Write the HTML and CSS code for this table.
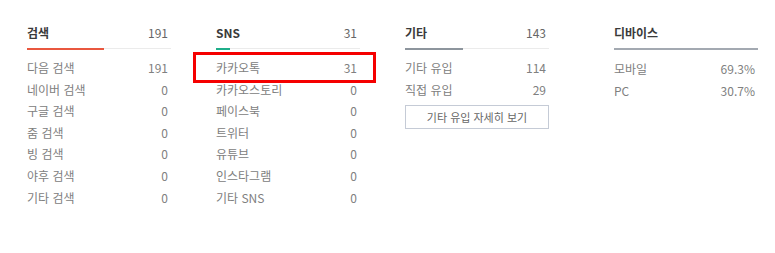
FILE: index.html
```html
<!DOCTYPE html>
<html lang="ko">
<head>
<meta charset="utf-8">
<link rel="stylesheet" href="styles.css">
</head>
<body>
<div class="stats">
  <section class="col">
    <div class="head"><span class="title">검색</span><span class="num">191</span></div>
    <div class="bar"><span class="fill fill-red" style="width:77px"></span></div>
    <ul class="rows">
      <li><span>다음 검색</span><span>191</span></li>
      <li><span>네이버 검색</span><span>0</span></li>
      <li><span>구글 검색</span><span>0</span></li>
      <li><span>줌 검색</span><span>0</span></li>
      <li><span>빙 검색</span><span>0</span></li>
      <li><span>야후 검색</span><span>0</span></li>
      <li><span>기타 검색</span><span>0</span></li>
    </ul>
  </section>
  <section class="col">
    <div class="head"><span class="title">SNS</span><span class="num">31</span></div>
    <div class="bar"><span class="fill fill-green" style="width:14px"></span></div>
    <ul class="rows">
      <li class="hl"><span>카카오톡</span><span>31</span></li>
      <li><span>카카오스토리</span><span>0</span></li>
      <li><span>페이스북</span><span>0</span></li>
      <li><span>트위터</span><span>0</span></li>
      <li><span>유튜브</span><span>0</span></li>
      <li><span>인스타그램</span><span>0</span></li>
      <li><span>기타 SNS</span><span>0</span></li>
    </ul>
  </section>
  <section class="col">
    <div class="head"><span class="title">기타</span><span class="num">143</span></div>
    <div class="bar"><span class="fill fill-grey" style="width:58px"></span></div>
    <ul class="rows">
      <li><span>기타 유입</span><span>114</span></li>
      <li><span>직접 유입</span><span>29</span></li>
    </ul>
    <button class="more" type="button">기타 유입 자세히 보기</button>
  </section>
  <section class="col col-device">
    <div class="head"><span class="title">디바이스</span></div>
    <div class="bar bar-device"></div>
    <ul class="rows">
      <li><span>모바일</span><span>69.3%</span></li>
      <li><span>PC</span><span>30.7%</span></li>
    </ul>
  </section>
</div>
</body>
</html>
```
FILE: styles.css
```css
html, body {
  margin: 0;
  padding: 0;
  background: #fff;
}
body {
  font-family: "Noto Sans CJK KR", "Noto Sans", sans-serif;
  color: #666;
}
.stats {
  display: flex;
  padding: 23px 0 0 27px;
}
.col {
  width: 144px;
  margin-right: 45px;
  position: relative;
}
.col-device {
  margin-left: 20px;
  margin-right: 0;
}
.head {
  display: flex;
  justify-content: space-between;
  align-items: center;
  height: 20px;
  line-height: 20px;
  padding-right: 3px;
}
.title {
  font-size: 12px;
  font-weight: 700;
  color: #3a3a3a;
}
.num {
  font-size: 12px;
  color: #666;
}
.bar {
  margin-top: 5px;
  height: 1px;
  background: #ebebeb;
  display: flex;
}
.fill {
  height: 1px;
  display: block;
}
.fill-red { background: #e9573f; height: 2px; }
.fill-green { background: #1fae8a; height: 2px; }
.fill-grey { background: #8d959d; height: 2px; }
.bar-device {
  height: 2px;
  background: #a3a9b1;
}
.rows {
  list-style: none;
  margin: 8px 0 0;
  padding: 0;
}
.rows li {
  display: flex;
  justify-content: space-between;
  height: 21.6px;
  line-height: 21.6px;
  font-size: 12px;
  color: #808080;
  padding-right: 3px;
}
.rows li.hl {
  position: relative;
}
.rows li.hl::after {
  content: "";
  position: absolute;
  left: -23px;
  right: -16px;
  top: -5px;
  bottom: -4px;
  border: 3px solid #f50000;
}
.more {
  display: block;
  width: 144px;
  height: 24px;
  margin-top: 5px;
  padding: 0;
  border: 1px solid #c5cbd6;
  background: #fff;
  font-family: "Noto Sans CJK KR", "Noto Sans", sans-serif;
  font-size: 11px;
  color: #666;
  cursor: pointer;
}
```
